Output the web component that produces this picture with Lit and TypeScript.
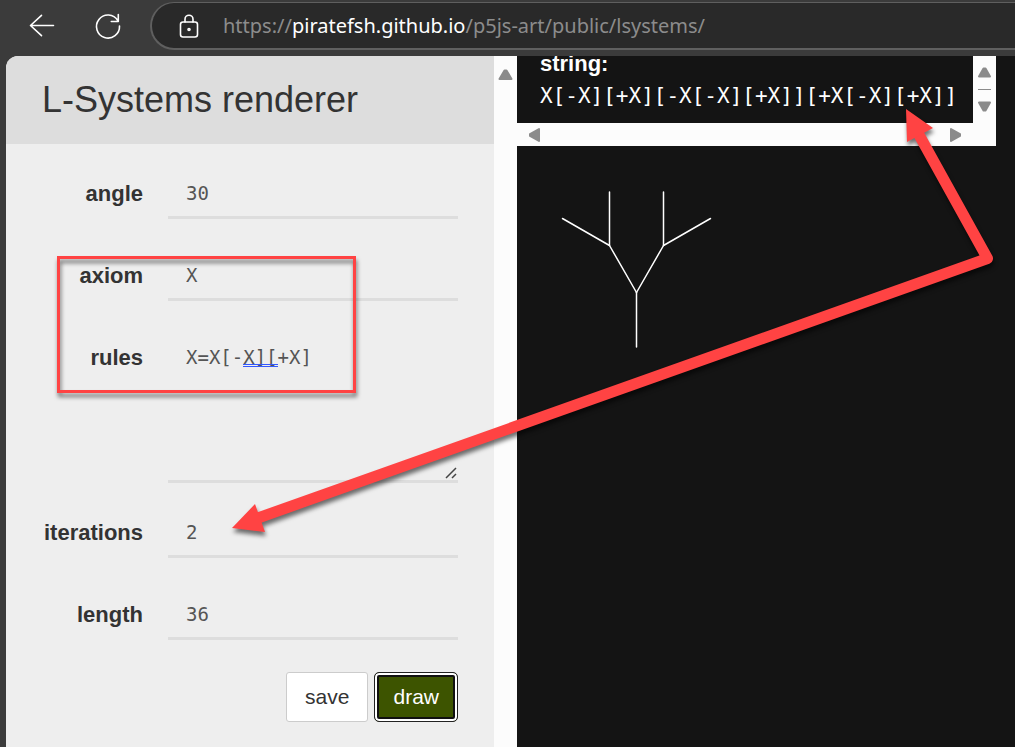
import { LitElement, html, css, svg } from "lit";
import { customElement, state } from "lit/decorators.js";

type Segment = [number, number, number, number];

/** Toolbar of the browser window: back, reload and the address field. */
@customElement("browser-bar")
class BrowserBar extends LitElement {
  static styles = css`
    :host {
      display: flex;
      align-items: center;
      height: 56px;
      box-sizing: border-box;
      padding: 0 0 4px 24px;
      background: #3b3b3b;
    }
    .tool {
      width: 36px;
      height: 36px;
      margin-right: 30px;
      padding: 0;
      border: 0;
      background: none;
    }
    .tool:last-of-type {
      margin-right: 24px;
    }
    svg {
      display: block;
      flex: none;
      fill: none;
      stroke: #fff;
      stroke-width: 1.6;
      stroke-linecap: round;
      stroke-linejoin: round;
    }
    .address {
      flex: 1;
      min-width: 0;
      display: flex;
      align-items: center;
      gap: 24px;
      height: 48px;
      box-sizing: border-box;
      padding-left: 27px;
      border: 2px solid #5f5f5f;
      border-width: 1px 0 2px 2px;
      border-radius: 24px 0 0 24px;
      background: #292929;
    }
    .url {
      font: 20px/30px "Noto Sans", sans-serif;
      color: #8c8c8c;
      text-decoration: none;
      white-space: nowrap;
    }
    .host {
      color: #fff;
    }
  `;

  render() {
    return html`
      <button class="tool" aria-label="Back">
        <svg width="36" height="36" viewBox="0 0 36 36">
          <path d="M29.5 17.5H6.5M17.5 7.3 6.500 17.500l11 10.200" />
        </svg>
      </button>
      <button class="tool" aria-label="Reload">
        <svg width="36" height="36" viewBox="0 0 36 36">
          <path d="M27.800 12.500A11.500 11.500 0 1 0 29.500 18M28.300 6.500v7h-7" />
        </svg>
      </button>
      <div class="address">
        <svg width="20" height="24" viewBox="0 0 20 24">
          <rect x="1.500" y="8" width="17" height="15" rx="2.500" />
          <path d="M6 8V5.200a4 4 0 0 1 8 0V8" />
          <circle cx="10" cy="15.500" r="1" />
        </svg>
        <a class="url" href="#"
          >https://<span class="host">piratefsh.github.io</span
          >/p5js-art/public/lsystems/</a
        >
      </div>
    `;
  }
}

/** Settings form of the renderer. */
@customElement("settings-panel")
class SettingsPanel extends LitElement {
  static styles = css`
    :host {
      display: block;
      background: #eee;
      color: #333;
      font-family: "Liberation Sans", Arial, sans-serif;
      border-radius: 12px 0 0 0;
      overflow: hidden;
    }
    header {
      padding: 22px 36px;
      background: #ddd;
    }
    h1 {
      margin: 0;
      font-size: 36px;
      line-height: 44px;
      font-weight: 400;
      white-space: nowrap;
    }
    form {
      padding: 26px 36px;
    }
    .row {
      display: grid;
      grid-template-columns: 101px 1fr;
      column-gap: 25px;
      margin-bottom: 33px;
    }
    .row.tall {
      margin-bottom: 26px;
    }
    .row:nth-last-child(2) {
      margin-bottom: 32px;
    }
    label {
      font-size: 22px;
      line-height: 48px;
      font-weight: 700;
      text-align: right;
    }
    .field {
      position: relative;
      font: 19px/26px "DejaVu Sans Mono", monospace;
    }
    input,
    textarea {
      display: block;
      width: 100%;
      box-sizing: border-box;
      height: 49px;
      margin: 0;
      padding: 10px 18px;
      border: 0;
      border-bottom: 3px solid #ddd;
      border-radius: 0;
      outline: 0;
      background: none;
      color: #555;
      font: inherit;
      resize: none;
    }
    textarea {
      height: 149px;
      overflow: hidden;
    }
    .squiggle {
      position: absolute;
      left: calc(18px + 5ch);
      top: 30px;
      width: 3ch;
      height: 1px;
      border: 1px solid #3358ff;
      border-width: 1px 0;
    }
    .grip {
      position: absolute;
      right: 1px;
      bottom: 4px;
      stroke: #444;
      stroke-width: 1.5;
    }
    .actions {
      display: flex;
      justify-content: flex-end;
      gap: 6px;
    }
    button {
      height: 50px;
      box-sizing: border-box;
      padding: 0 18px;
      border: 1px solid #ccc;
      border-radius: 3px;
      background: #fff;
      color: #333;
      font: 21px/48px "Liberation Sans", Arial, sans-serif;
    }
    .primary {
      border-color: #222;
      border-radius: 5px;
      background: #3d5400;
      color: #fff;
      box-shadow: inset 0 0 0 2px #fff, inset 0 0 0 4px #101010;
    }
  `;

  private row(name: string, value: string) {
    return html`
      <div class="row">
        <label for=${name}>${name}</label>
        <div class="field"><input id=${name} .value=${value} /></div>
      </div>
    `;
  }

  render() {
    return html`
      <header><h1>L-Systems renderer</h1></header>
      <form @submit=${(e: Event) => e.preventDefault()}>
        ${this.row("angle", "30")} ${this.row("axiom", "X")}
        <div class="row tall">
          <label for="rules">rules</label>
          <div class="field">
            <textarea id="rules" spellcheck="false" .value=${"X=X[-X][+X]"}></textarea>
            <span class="squiggle"></span>
            <svg class="grip" width="12" height="12" viewBox="0 0 12 12">
              <path d="M1 11 11 1M7 11l4-4" />
            </svg>
          </div>
        </div>
        ${this.row("iterations", "2")} ${this.row("length", "36")}
        <div class="actions">
          <button type="button">save</button>
          <button type="submit" class="primary">draw</button>
        </div>
      </form>
    `;
  }
}

/** Expanded string and the canvas with the plant. */
@customElement("result-view")
class ResultView extends LitElement {
  static styles = css`
    :host {
      display: block;
      background: #141414;
      color: #fff;
    }
    .output {
      display: grid;
      grid-template-columns: 1fr 23px;
      grid-template-rows: 67px 23px;
      margin-right: 19px;
      background: #fcfcfc;
    }
    .text {
      display: flex;
      flex-direction: column;
      justify-content: flex-end;
      min-width: 0;
      box-sizing: border-box;
      padding: 0 16px 11px 23px;
      background: #141414;
      overflow: hidden;
      white-space: nowrap;
      line-height: 32px;
    }
    .caption {
      font-family: "Liberation Sans", Arial, sans-serif;
      font-size: 22px;
      font-weight: 700;
    }
    .value {
      font-family: "DejaVu Sans Mono", monospace;
      font-size: 21px;
    }
    .across {
      display: flex;
      justify-content: space-between;
      align-items: center;
      padding: 0 11px;
    }
    .arrow {
      display: block;
      fill: #8b8b8b;
      stroke: #8b8b8b;
      stroke-width: 2;
      stroke-linejoin: round;
    }
    .rule {
      stroke-width: 1;
    }
    .plant {
      display: block;
      margin: 44px;
      stroke: #fff;
      stroke-width: 1.5;
      stroke-linecap: round;
    }
  `;

  @state() private segments: Segment[] = [
    [75.5, 157, 75.5, 102.5],
    [75.5, 102.5, 48.5, 55.5],
    [75.5, 102.5, 102.5, 55.5],
    [48.5, 55.5, 48.5, 2],
    [48.5, 55.5, 1.5, 28.5],
    [102.5, 55.5, 102.5, 2],
    [102.5, 55.5, 149.5, 28.5],
  ];

  render() {
    return html`
      <div class="output">
        <div class="text">
          <span class="caption">string:</span>
          <span class="value">X[-X][+X][-X[-X][+X]][+X[-X][+X]]</span>
        </div>
        <svg class="arrow" width="23" height="67" viewBox="0 0 23 67">
          <path d="M6 20.5h11L12.500 12.500h-2zM6 46.500h11L12.500 54.500h-2z" />
          <path class="rule" d="M5 33.5h13" />
        </svg>
        <div class="across">
          <svg class="arrow" width="13" height="16" viewBox="0 0 13 16">
            <path d="M11 2v12L2 9V7z" />
          </svg>
          <svg class="arrow" width="13" height="16" viewBox="0 0 13 16">
            <path d="M2 2v12l9-5V7z" />
          </svg>
        </div>
      </div>
      <svg class="plant" width="152" height="160" viewBox="0 0 152 160">
        ${this.segments.map(
          ([x1, y1, x2, y2]) => svg`<line x1=${x1} y1=${y1} x2=${x2} y2=${y2} />`
        )}
      </svg>
    `;
  }
}

@customElement("app-root")
class AppRoot extends LitElement {
  static styles = css`
    :host {
      display: flex;
      flex-direction: column;
      position: relative;
      height: 100vh;
      overflow: hidden;
      background: #3b3b3b;
    }
    main {
      flex: 1;
      min-height: 0;
      display: grid;
      grid-template-columns: minmax(0, 488fr) 23px minmax(0, 498fr);
      padding-left: 6px;
      overflow: hidden;
    }
    .track {
      padding: 11px 4px;
      background: #fcfcfc;
    }
    .up {
      display: block;
      fill: #8b8b8b;
      stroke: #8b8b8b;
      stroke-width: 2;
      stroke-linejoin: round;
    }
    .marks {
      position: absolute;
      left: 0;
      top: 0;
      pointer-events: none;
      fill: none;
      stroke: #ff4343;
      stroke-linejoin: round;
      filter: drop-shadow(1px 4px 2px rgba(0, 0, 0, 0.55));
    }
    .frame {
      stroke-width: 3;
      stroke-linejoin: miter;
    }
    .head {
      fill: #ff4343;
      stroke: none;
    }
  `;

  render() {
    return html`
      <browser-bar></browser-bar>
      <main>
        <settings-panel></settings-panel>
        <div class="track">
          <svg class="up" width="15" height="15" viewBox="0 0 15 15">
            <path d="M1.500 12h12L8.500 3.500h-2z" />
          </svg>
        </div>
        <result-view></result-view>
      </main>
      <svg class="marks" width="1015" height="747" viewBox="0 0 1015 747">
        <rect class="frame" x="58.5" y="257.5" width="296" height="134" />
        <path d="M918 133 987.5 258.5 258 518" stroke-width="11" />
        <path class="head" d="M906 109 933 128 907 142zM232 528 255 504 265 532z" />
      </svg>
    `;
  }
}
